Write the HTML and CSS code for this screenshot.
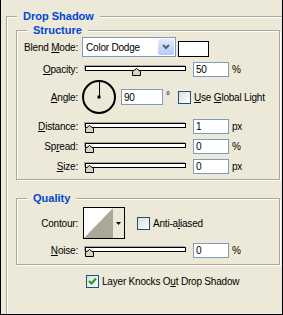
FILE: index.html
```html
<!DOCTYPE html>
<html lang="en">
<head>
    <meta charset="UTF-8">
    <meta name="viewport" content="width=device-width, initial-scale=1.0">
    <title>Drop Shadow</title>
    <link rel="stylesheet" href="styles.css">
</head>
<body>
    <div class="panel">
        <span class="legend">Drop Shadow</span>

        <div class="group structure">
            <span class="legend">Structure</span>

            <div class="row row-blend">
                <span class="lbl">Blend <u>M</u>ode:</span>
                <div class="select">
                    <span>Color Dodge</span>
                    <span class="select-btn">
                        <svg width="8" height="6" viewBox="0 0 8 6"><polyline points="1,1 4,4 7,1" fill="none" stroke="#4D6185" stroke-width="2"/></svg>
                    </span>
                </div>
                <span class="swatch"></span>
            </div>

            <div class="row row-field">
                <span class="lbl"><u>O</u>pacity:</span>
                <div class="slider">
                    <div class="track"></div>
                    <svg class="thumb" style="left: 50px" width="9" height="8" viewBox="0 0 9 8"><path d="M0.5 7.5V3.5L4.5 0.5L8.5 3.5V7.5Z" fill="#D8D4C6" stroke="#000"/></svg>
                </div>
                <input class="field" type="text" value="50">
                <span class="unit">%</span>
            </div>

            <div class="row row-angle">
                <span class="lbl"><u>A</u>ngle:</span>
                <svg class="dial" width="34" height="34" viewBox="0 0 34 34">
                    <circle cx="17" cy="17" r="16" fill="none" stroke="#000" stroke-width="2"/>
                    <line x1="17" y1="17" x2="17" y2="2" stroke="#000" stroke-width="1" shape-rendering="crispEdges"/>
                    <rect x="15.5" y="15.5" width="3" height="3" fill="#000"/>
                </svg>
                <input class="field field-angle" type="text" value="90">
                <span class="degree">°</span>
                <span class="check"></span>
                <span class="check-label"><u>U</u>se <u>G</u>lobal Light</span>
            </div>

            <div class="row row-field">
                <span class="lbl"><u>D</u>istance:</span>
                <div class="slider">
                    <div class="track"></div>
                    <svg class="thumb" style="left: 3px" width="9" height="8" viewBox="0 0 9 8"><path d="M0.5 7.5V3.5L4.5 0.5L8.5 3.5V7.5Z" fill="#D8D4C6" stroke="#000"/></svg>
                </div>
                <input class="field" type="text" value="1">
                <span class="unit">px</span>
            </div>

            <div class="row row-field">
                <span class="lbl">Sp<u>r</u>ead:</span>
                <div class="slider">
                    <div class="track"></div>
                    <svg class="thumb" style="left: 3px" width="9" height="8" viewBox="0 0 9 8"><path d="M0.5 7.5V3.5L4.5 0.5L8.5 3.5V7.5Z" fill="#D8D4C6" stroke="#000"/></svg>
                </div>
                <input class="field" type="text" value="0">
                <span class="unit">%</span>
            </div>

            <div class="row row-field">
                <span class="lbl"><u>S</u>ize:</span>
                <div class="slider">
                    <div class="track"></div>
                    <svg class="thumb" style="left: 3px" width="9" height="8" viewBox="0 0 9 8"><path d="M0.5 7.5V3.5L4.5 0.5L8.5 3.5V7.5Z" fill="#D8D4C6" stroke="#000"/></svg>
                </div>
                <input class="field" type="text" value="0">
                <span class="unit">px</span>
            </div>
        </div>

        <div class="group quality">
            <span class="legend">Quality</span>

            <div class="row row-contour">
                <span class="lbl">Contour:</span>
                <div class="contour">
                    <svg class="curve" width="29" height="30" viewBox="0 0 29 30"><polygon points="0,30 29,0 29,30" fill="#ACA899"/></svg>
                    <span class="contour-arrow">
                        <svg width="5" height="3" viewBox="0 0 5 3"><polygon points="0,0 5,0 2.5,3" fill="#000"/></svg>
                    </span>
                </div>
                <span class="check check-aa"></span>
                <span class="check-label">Anti-a<u>l</u>iased</span>
            </div>

            <div class="row row-field row-noise">
                <span class="lbl"><u>N</u>oise:</span>
                <div class="slider">
                    <div class="track"></div>
                    <svg class="thumb" style="left: 3px" width="9" height="8" viewBox="0 0 9 8"><path d="M0.5 7.5V3.5L4.5 0.5L8.5 3.5V7.5Z" fill="#D8D4C6" stroke="#000"/></svg>
                </div>
                <input class="field" type="text" value="0">
                <span class="unit">%</span>
            </div>
        </div>

        <div class="row knockout">
            <span class="check">
                <svg width="11" height="11" viewBox="0 0 11 11"><polyline points="2,5 4.5,7.5 9,2.5" fill="none" stroke="#21A121" stroke-width="2.2"/></svg>
            </span>
            <span class="check-label">Layer Knocks O<u>u</u>t Drop Shadow</span>
        </div>
    </div>
</body>
</html>
```

FILE: styles.css
```css
html, body { margin: 0; }
body {
    width: 283px;
    height: 315px;
    box-sizing: border-box;
    border: 1px solid #000;
    border-top: none;
    background-color: #ECE9D8;
    overflow: hidden;
    font-family: "Liberation Sans", Arial, sans-serif;
    font-size: 10px;
    letter-spacing: -0.2px;
    color: #000;
}
.panel {
    position: relative;
    height: 297px;
    margin: 16px 0 0 5px;
    border-top: 1px solid #ACA899;
    border-left: 1px solid #ACA899;
    box-shadow: inset 1px 1px 0 #fff;
}
.legend {
    position: absolute;
    top: -7px;
    left: 10px;
    padding: 0 6px;
    background-color: #ECE9D8;
    font-size: 11px;
    line-height: 13px;
    font-weight: bold;
    letter-spacing: 0;
    color: #0046D5;
}
.group {
    position: relative;
    width: 264px;
    box-sizing: border-box;
    margin-left: 9px;
    border: 1px solid #ACA899;
    box-shadow: inset 1px 1px 0 #fff, 1px 1px 0 #fff;
}
.structure { margin-top: 13px; padding: 6px 0 5px; }
.quality { margin-top: 18px; padding: 8px 0 6px; }

.row { display: flex; align-items: center; }
.lbl {
    flex: none;
    width: 61px;
    text-align: right;
    white-space: nowrap;
}
.row-blend { height: 20px; }
.row-field { height: 15px; margin-top: 5px; }
.row-angle { height: 34px; margin-top: 3px; }
.row-contour { height: 32px; }
.row-noise { margin-top: 4px; }

.select {
    flex: none;
    width: 94px;
    height: 20px;
    box-sizing: border-box;
    margin-left: 4px;
    padding: 0 1px 0 3px;
    border: 1px solid #7F9DB9;
    background-color: #fff;
    display: flex;
    align-items: center;
    justify-content: space-between;
}
.select-btn {
    width: 16px;
    height: 16px;
    border-radius: 2px;
    background: linear-gradient(#E3EBFE, #B6C9F6);
    display: flex;
    align-items: center;
    justify-content: center;
}
.swatch {
    flex: none;
    width: 31px;
    height: 16px;
    box-sizing: border-box;
    margin: 3px 0 0 2px;
    border: 1px solid #000;
    background-color: #fff;
}

.slider {
    position: relative;
    flex: none;
    width: 106px;
    height: 15px;
    margin-left: 4px;
}
.track {
    width: 101px;
    height: 5px;
    box-sizing: border-box;
    margin: 4px 0 0 3px;
    border: 1px solid #000;
    background-color: #fff;
    box-shadow: -1px -1px 0 #ACA899;
}
.thumb { position: absolute; top: 6px; }

.field {
    flex: none;
    width: 36px;
    height: 15px;
    box-sizing: border-box;
    margin: 0 0 0 5px;
    padding: 0 2px;
    border: 1px solid #7F9DB9;
    background-color: #fff;
    font: inherit;
    letter-spacing: inherit;
    color: #000;
    outline: none;
}
.field-angle { width: 42px; height: 16px; }
.unit { margin-left: 3px; }

.dial { flex: none; margin-left: 4px; }
.degree {
    width: 12px;
    margin-left: 3px;
    align-self: flex-start;
    margin-top: 10px;
}

.check {
    flex: none;
    width: 13px;
    height: 13px;
    box-sizing: border-box;
    border: 1px solid #1C5180;
    background: linear-gradient(135deg, #DCDCD7, #fff);
    display: flex;
    align-items: center;
    justify-content: center;
}
.check-label { margin-left: 3px; white-space: nowrap; }
.check-aa { margin-left: 12px; }

.contour {
    flex: none;
    display: flex;
    width: 42px;
    height: 32px;
    box-sizing: border-box;
    margin-left: 5px;
    border: 1px solid #000;
    background-color: #fff;
}
.curve { display: block; }
.contour-arrow {
    flex: 1;
    background-color: #ECE9D8;
    display: flex;
    align-items: center;
    justify-content: center;
}

.knockout { margin: 10px 0 0 79px; }
```
